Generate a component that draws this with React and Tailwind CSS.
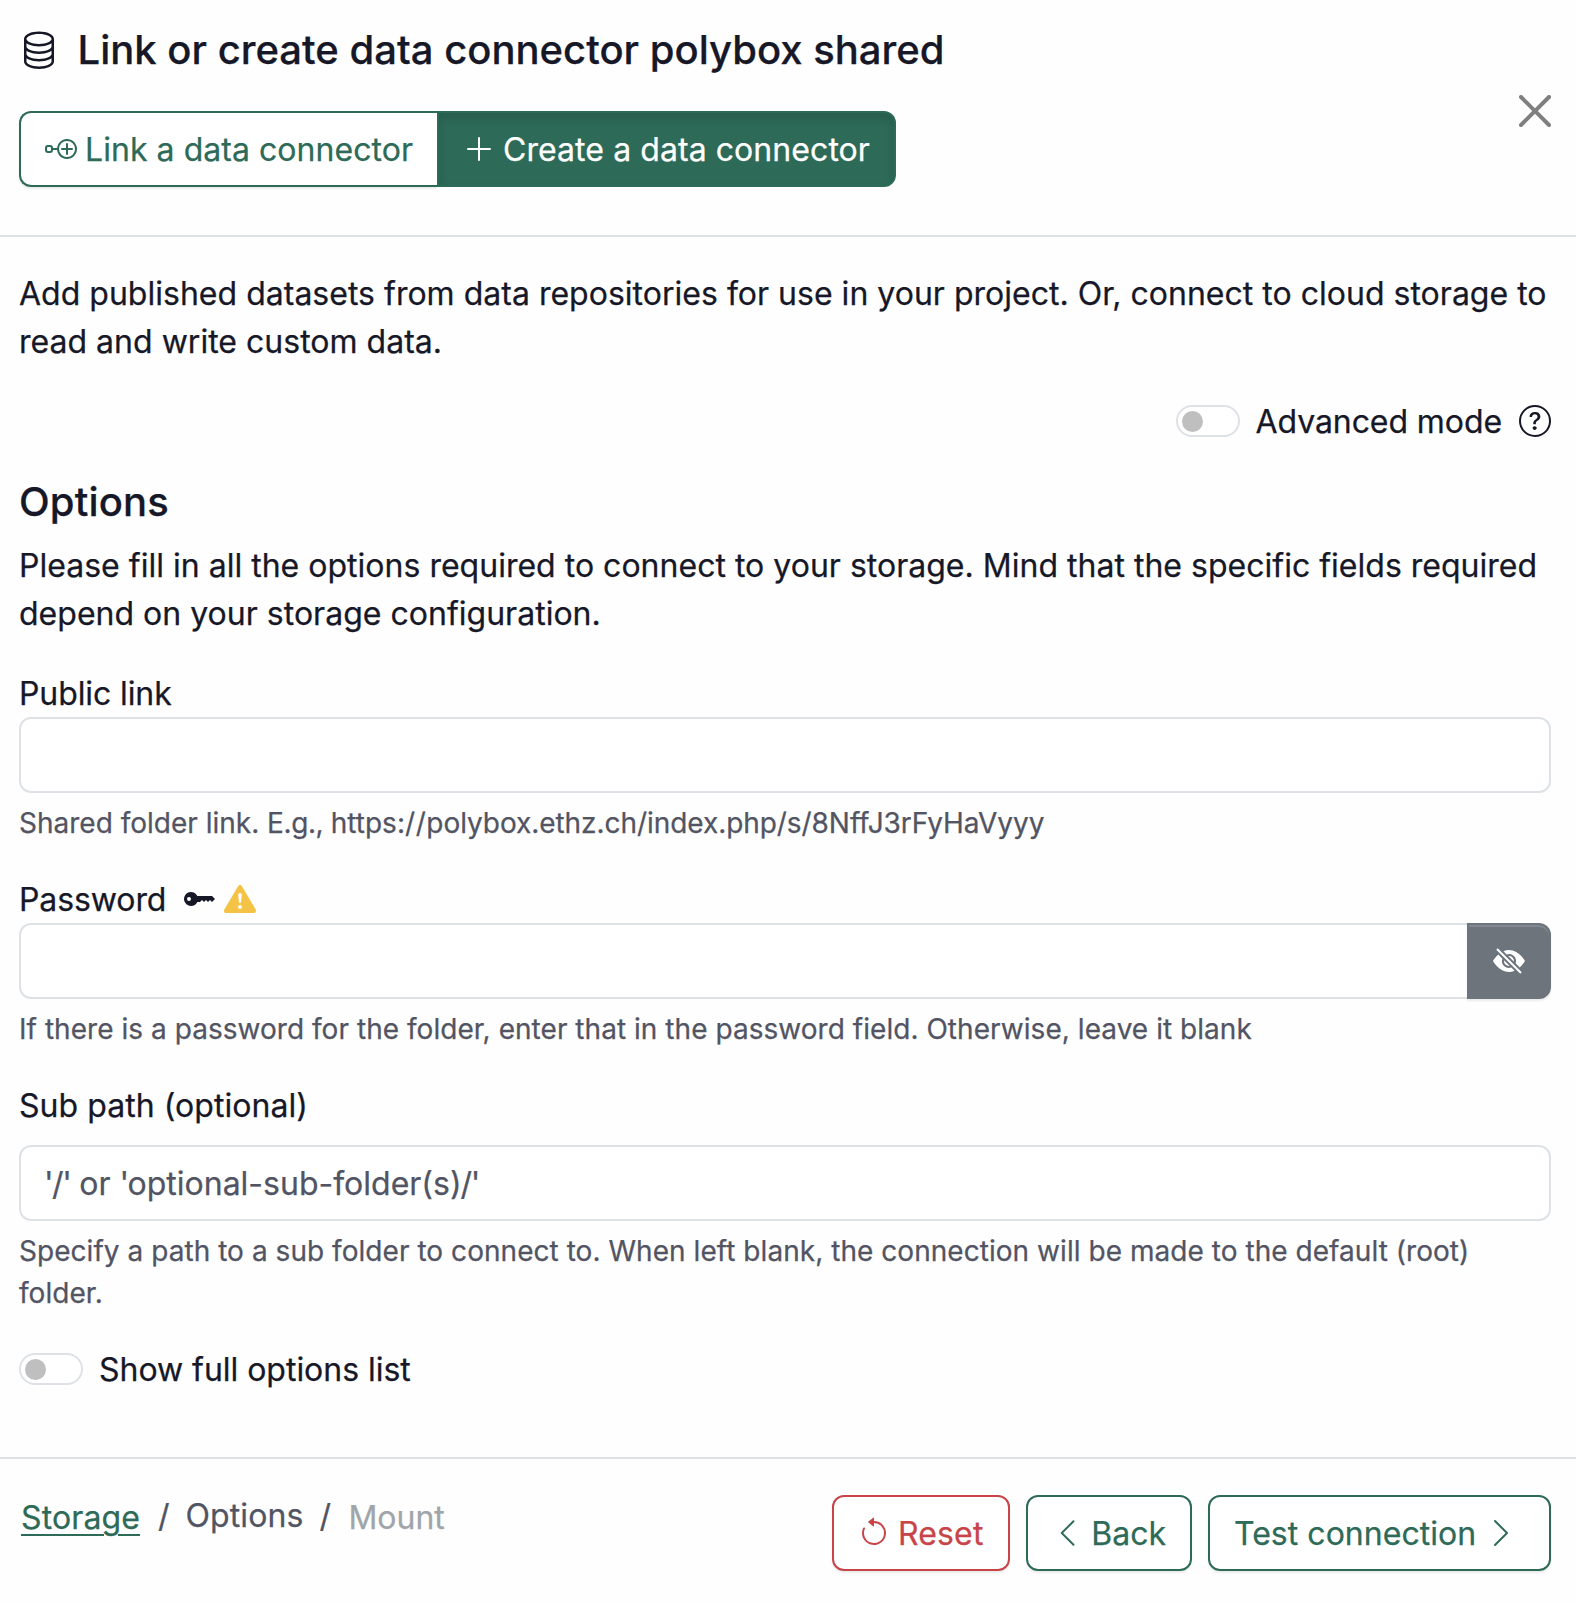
import React from "react";
import {
  BsArrowCounterclockwise,
  BsChevronLeft,
  BsChevronRight,
  BsDatabase,
  BsExclamationTriangleFill,
  BsEyeSlashFill,
  BsKeyFill,
  BsNodePlus,
  BsPlusLg,
  BsQuestionCircle,
} from "react-icons/bs";

const inputClass =
  "block h-[76px] w-full rounded-xl border-2 border-[#dee2e6] bg-white px-6 text-[32px] leading-[48px] text-[#171827] outline-none";
const helpClass = "mt-2 translate-y-px text-[28px] leading-[42px] text-[#525463]";
const buttonClass =
  "flex h-[76px] items-center rounded-xl border-2 bg-white px-6 text-[32px] leading-[48px] shadow-[0_2px_2px_rgba(0,0,0,0.075)]";

function Toggle() {
  return (
    <span className="flex h-8 w-16 shrink-0 items-center rounded-full border-2 border-[#dee2e6] bg-white pl-1">
      <span className="size-[21px] rounded-full bg-[#bfbfbf]" />
    </span>
  );
}

function CloseIcon() {
  return (
    <svg viewBox="0 0 16 16" className="size-8 fill-[#7f7f7f]" aria-hidden="true">
      <path d="M.293.293a1 1 0 0 1 1.414 0L8 6.586 14.293.293a1 1 0 1 1 1.414 1.414L9.414 8l6.293 6.293a1 1 0 0 1-1.414 1.414L8 9.414l-6.293 6.293a1 1 0 0 1-1.414-1.414L6.586 8 .293 1.707a1 1 0 0 1 0-1.414z" />
    </svg>
  );
}

export default function App() {
  return (
    <div className="flex h-[1602px] w-full flex-col bg-[#fefefe] font-['Inter',sans-serif] text-[32px] leading-[48px] text-[#171827] [-webkit-text-stroke:0.25px]">
      <header className="flex h-[237px] shrink-0 items-start justify-between border-b-2 border-[#dee2e6] pr-[25px] pl-[19px]">
        <div className="pt-[26px]">
          <h2 className="flex h-12 items-center text-[40px] leading-[48px] font-medium">
            <BsDatabase className="mr-[18.5px] size-10 -translate-y-px" />
            <span className="tracking-[0.01px]">Link or create data connector polybox shared</span>
          </h2>
          <div className="mt-[37px] flex">
            <button className="flex h-[76px] w-[418px] items-center rounded-l-xl border-2 border-r-0 border-[#2d6a57] bg-white pl-6 text-[#2d6a57] shadow-[0_2px_2px_rgba(0,0,0,0.075)]">
              <BsNodePlus className="mr-2 size-8" />
              <span className="translate-y-px tracking-[0.05px]">Link a data connector</span>
            </button>
            <button className="flex h-[76px] w-[459px] items-center rounded-r-xl border-2 border-[#2d6a57] bg-[#2d6a57] pl-6 text-white shadow-[inset_0_6px_10px_rgba(0,0,0,0.125)]">
              <BsPlusLg className="mr-2 size-8" />
              <span className="translate-y-px tracking-[0.07px]">Create a data connector</span>
            </button>
          </div>
        </div>
        <button className="mt-[95px]" aria-label="Close">
          <CloseIcon />
        </button>
      </header>

      <main className="flex flex-col pt-8 pr-[25px] pl-[19px]">
        <p className="translate-y-px tracking-[0.015px]">
          Add published datasets from data repositories for use in your project. Or, connect to cloud storage to
          <br />
          read and write custom data.
        </p>
        <div className="mt-8 flex items-center justify-end">
          <Toggle />
          <span className="ml-4 translate-y-px tracking-[-0.08px]">Advanced mode</span>
          <BsQuestionCircle className="ml-[17px] size-8" />
        </div>

        <h3 className="mt-8 translate-y-px text-[40px] leading-[48px] font-medium tracking-[0.15px]">Options</h3>
        <p className="mt-4 translate-y-px tracking-[0.015px]">
          Please fill in all the options required to connect to your storage. Mind that the specific fields required
          <br />
          depend on your storage configuration.
        </p>

        <section className="mt-8">
          <label className="block translate-y-px tracking-[-0.1px]">Public link</label>
          <input className={inputClass} />
          <p className={helpClass}>
            Shared folder link. <span className="tracking-[-0.4px]">E.g., </span>
            https:<span className="tracking-[0.6px]">//</span>
            <span className="tracking-[-0.06px]">polybox.ethz.ch/index.php/s/8NffJ3rFyHaVyyy</span>
          </p>
        </section>

        <section className="mt-8">
          <label className="flex items-center">
            <span className="translate-y-px tracking-[-0.1px]">Password</span>
            <BsKeyFill className="ml-[18px] size-8" />
            <BsExclamationTriangleFill className="ml-2 size-8 text-[#f4c244]" />
          </label>
          <div className="flex">
            <input className="block h-[76px] min-w-0 flex-1 rounded-l-xl border-2 border-r-0 border-[#dee2e6] bg-white px-6 outline-none" />
            <button
              aria-label="Show password"
              className="flex h-[76px] w-[84px] items-center justify-center rounded-r-xl border-2 border-[#6d747c] bg-[#6d747c] text-white shadow-[inset_0_2px_0_rgba(255,255,255,0.15),0_2px_2px_rgba(0,0,0,0.075)]"
            >
              <BsEyeSlashFill className="size-8" />
            </button>
          </div>
          <p className={`${helpClass} tracking-[0.04px]`}>
            If there is a password for the folder, enter that in the password field. Otherwise, leave it blank
          </p>
        </section>

        <section className="mt-8">
          <label className="mb-4 block translate-y-px tracking-[0.05px]">Sub path (optional)</label>
          <div className={`${inputClass} flex items-center whitespace-pre`}>
            <span className="-ml-px translate-y-px text-[#525463]">
              <span className="tracking-[-1.5px]">'/'</span> or <span className="tracking-[-1.5px]">'</span>
              optional-sub-folder(s<span className="tracking-[-1.2px]">)/'</span>
            </span>
          </div>
          <p className={`${helpClass} tracking-[0.045px]`}>
            Specify a path to a sub folder to connect to. When left blank, the connection will be made to the default (root)
            <br />
            folder.
          </p>
        </section>

        <div className="mt-8 flex items-center">
          <Toggle />
          <span className="ml-4 translate-y-px tracking-[-0.03px]">Show full options list</span>
        </div>
      </main>

      <footer className="mt-16 flex flex-1 items-start justify-between border-t-2 border-[#dee2e6] pr-[25px] pl-[21px]">
        <nav className="flex pt-[33px] text-[#525463]">
          <a className="mt-[2px] tracking-[0.12px] text-[#2d6a57] underline decoration-2 underline-offset-[5px]">Storage</a>
          <span className="ml-[18px]">/</span>
          <span className="ml-4 tracking-[0.08px]">Options</span>
          <span className="ml-4">/</span>
          <span className="mt-[2px] ml-[17.5px] text-[#a0a5aa]">Mount</span>
        </nav>
        <div className="flex gap-4 pt-9">
          <button className={`${buttonClass} w-[178px] border-[#c94448] text-[#c94448]`}>
            <BsArrowCounterclockwise className="mr-2 size-8" />
            <span className="translate-y-px tracking-[0.15px]">Reset</span>
          </button>
          <button className={`${buttonClass} w-[166px] border-[#2d6a57] text-[#2d6a57]`}>
            <BsChevronLeft className="mr-2 size-8" />
            <span className="translate-y-px">Back</span>
          </button>
          <button className={`${buttonClass} w-[343px] border-[#2d6a57] text-[#2d6a57]`}>
            <span className="translate-y-px tracking-[0.03px]">Test connection</span>
            <BsChevronRight className="ml-[9px] size-8" />
          </button>
        </div>
      </footer>
    </div>
  );
}
